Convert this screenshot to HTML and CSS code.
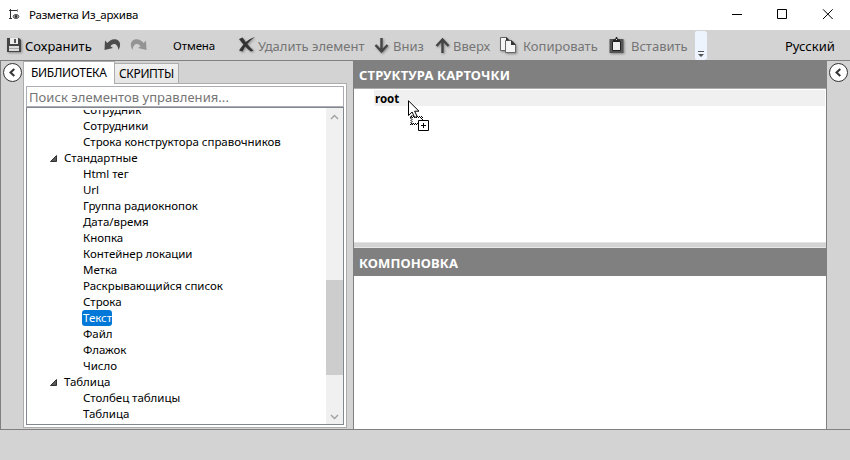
FILE: index.html
```
<!DOCTYPE html>
<html lang="ru">
<head>
<meta charset="utf-8">
<title>Разметка Из_архива</title>
<link rel="stylesheet" href="styles.css">
</head>
<body>
<div class="window">
  <header class="titlebar">
    <svg class="app-icon" width="11" height="11" viewBox="0 0 11 11" fill="none" stroke="#333"><path d="M1.500 0v9.500M0 1.500h8.500M0 9.500h3" /><path d="M8.500 0v3" stroke="#999"/><ellipse cx="7" cy="7.500" rx="2.800" ry="1.900"/><circle cx="7" cy="7.500" r="1" fill="#111"/></svg>
    <span class="title">Разметка Из_архива</span>
    <svg class="caption" width="97" height="12" viewBox="0 0 97 12" fill="none" stroke="#000"><path d="M0 6.500h10M45.500 1.500h9v9h-9zM91 1.300l9.700 9.700M100.700 1.300L91 11"/></svg>
  </header>
  <div class="toolbar">
    <svg class="ic-save shadow" width="16" height="16" viewBox="0 0 16 16"><path d="M1 1h12l2 2v12H1z" fill="#444"/><path d="M4 1h8v6H4z" fill="#eee"/><path d="M8 2h2v4H8z" fill="#555"/><path d="M3 9h10v5H3z" fill="#ddd"/><path d="M3 11.500h10" stroke="#aaa"/></svg>
    <span class="t-save">Сохранить</span>
    <svg class="ic-undo" width="17" height="14" viewBox="0 0 17 14"><path d="M1 2.500L.5 12 9 10 6.500 8.300C9 4.800 13.500 5 14.500 12 18 6 15.500 1.500 11 1.200 7.500 1 5 3 3.300 5z" fill="#4c4c4c"/></svg>
    <svg class="ic-redo" width="17" height="14" viewBox="0 0 17 14"><path d="M16 2.500l.5 9.500L8 10l2.500-1.700C8 4.800 3.500 5 2.500 12-1 6 1.500 1.500 6 1.200 9.500 1 12 3 13.700 5z" fill="#949494"/></svg>
    <span class="t-cancel">Отмена</span>
    <svg class="ic-del shadow" width="17" height="16" viewBox="0 0 17 16" fill="#333"><path d="M0 2L3.500 .5C6 4 10 10 14.500 13.500L12 14.500C8 12 4 7 0 2z"/><path d="M16 0C10 4 6 9 3.500 14.500L0 13.500C4 7 9 2 16 0z"/></svg>
    <span class="t-del dim">Удалить элемент</span>
    <svg class="ic-down shadow" width="15" height="17" viewBox="0 0 15 17" fill="none" stroke="#444" stroke-width="2.400"><path d="M7.500 1v13M1.500 8l6 6.500 6-6.500"/></svg>
    <span class="t-down dim">Вниз</span>
    <svg class="ic-up shadow" width="15" height="17" viewBox="0 0 15 17" fill="none" stroke="#444" stroke-width="2.400"><path d="M7.500 16V3M1.500 9l6-6.500 6 6.500"/></svg>
    <span class="t-up dim">Вверх</span>
    <svg class="ic-copy shadow" width="17" height="17" viewBox="0 0 17 17" fill="#f5f5f5" stroke="#666"><path d="M.5 .5h6l3 3v10h-9z"/><path d="M5.500 3.500h6l4 4v8h-10z"/><path d="M11 3l5 5h-5zM6 0l3.500 3.500H6z" fill="#333" stroke="none"/></svg>
    <span class="t-copy dim">Копировать</span>
    <svg class="ic-paste shadow" width="16" height="17" viewBox="0 0 16 17"><path d="M.5 2h14v14H.5z" fill="#555"/><path d="M3.500 4.500h8v9h-8z" fill="#eee" stroke="#222"/><path d="M4 5V2.500h2L7 0h1l1 2.500h2V5z" fill="#222"/><path d="M7 2h1v1H7z" fill="#ddd"/></svg>
    <span class="t-paste dim">Вставить</span>
    <div class="overflow"><svg width="6" height="7" viewBox="0 0 6 7" fill="#555"><path d="M0 0h6v1H0zM0 3h6L3 6z"/></svg></div>
    <span class="t-lang">Русский</span>
  </div>
  <main class="body">
    <aside class="rail rail-left"><svg width="20" height="20" viewBox="0 0 20 20" fill="#fff" stroke="#333"><circle cx="10" cy="10" r="9"/><path d="M11.800 6.500L8 10l3.800 3.500" fill="none" stroke-width="2"/></svg></aside>
    <section class="library">
      <div class="tabs"><div class="tab active"><span class="t-tab1">БИБЛИОТЕКА</span></div><div class="tab"><span class="t-tab2">СКРИПТЫ</span></div></div>
      <div class="pane">
        <div class="search"><span class="t-search">Поиск элементов управления...</span></div>
        <div class="tree">
          <div class="items">
            <div class="item">Сотрудник</div>
            <div class="item">Сотрудники</div>
            <div class="item">Строка конструктора справочников</div>
            <div class="item group"><svg width="7" height="7" viewBox="0 0 7 7"><path d="M6.500 .5v6h-6z" fill="#595959" stroke="#333"/></svg>Стандартные</div>
            <div class="item">Html тег</div>
            <div class="item">Url</div>
            <div class="item">Группа радиокнопок</div>
            <div class="item">Дата/время</div>
            <div class="item">Кнопка</div>
            <div class="item">Контейнер локации</div>
            <div class="item">Метка</div>
            <div class="item">Раскрывающийся список</div>
            <div class="item">Строка</div>
            <div class="item"><span class="selected">Текст</span></div>
            <div class="item">Файл</div>
            <div class="item">Флажок</div>
            <div class="item">Число</div>
            <div class="item group"><svg width="7" height="7" viewBox="0 0 7 7"><path d="M6.500 .5v6h-6z" fill="#595959" stroke="#333"/></svg>Таблица</div>
            <div class="item">Столбец таблицы</div>
            <div class="item">Таблица</div>
          </div>
          <div class="scrollbar">
            <svg width="9" height="6" viewBox="0 0 9 6" fill="none" stroke="#a0a0a0" stroke-width="1.400"><path d="M1 5l3.500-3.500L8 5"/></svg>
            <div class="thumb"></div>
            <svg class="arrow-down" width="9" height="6" viewBox="0 0 9 6" fill="none" stroke="#a0a0a0" stroke-width="1.400"><path d="M1 1l3.500 3.500L8 1"/></svg>
          </div>
        </div>
      </div>
    </section>
    <section class="work">
      <h2 class="first"><span class="t-struct">СТРУКТУРА КАРТОЧКИ</span></h2>
      <div class="structure"><div class="root"><span class="t-root">root</span></div>
        <svg class="cursor" width="24" height="32" viewBox="0 0 24 32"><path d="M3 16v9M4 15v9" fill="none" stroke="#000" stroke-width="1" stroke-dasharray="1 1"/><path d="M3 16.500h12M2 17.500h12M3 23.500h8M2 24.500h8M13.500 16v4M14.500 17v3" fill="none" stroke="#000" stroke-dasharray="1 1"/><path d="M.5 .8v14.700l3.600-3.500 2.600 5.500 2.500-1-2.600-5.300h4.400z" fill="#fff" stroke="#000"/><path d="M10.500 20.500h10v10h-10z" fill="#fff" stroke="#000"/><path d="M15.500 23v5M13 25.500h5" stroke="#000"/></svg>
      </div>
      <div class="splitter"></div>
      <h2><span class="t-layout">КОМПОНОВКА</span></h2>
      <div class="layout"></div>
    </section>
    <aside class="rail rail-right"><svg width="20" height="20" viewBox="0 0 20 20" fill="#fff" stroke="#333"><circle cx="10" cy="10" r="9"/><path d="M11.800 6.500L8 10l3.800 3.500" fill="none" stroke-width="2"/></svg></aside>
  </main>
  <footer class="status"></footer>
</div>
</body>
</html>
```
FILE: styles.css
```
* { box-sizing: border-box; }
body { margin: 0; font-family: "Noto Sans", "Open Sans", sans-serif; font-size: 11.5px; color: #000; }
svg { display: block; flex: none; overflow: visible; }
span { white-space: nowrap; }
.window { width: 850px; height: 460px; display: flex; flex-direction: column; background: #d3d3d3; overflow: hidden; }
.titlebar { height: 30px; background: #fff; display: flex; align-items: center; padding: 0 17px 2px 9px; }
.title { width: 690px; margin-left: 9px; flex: none; letter-spacing: -.2px; }
.caption { margin-left: 13px; }
.toolbar { height: 31px; flex: none; border-bottom: 1px solid #808080; display: flex; align-items: center; font-size: 13px; padding-left: 6px; }
.toolbar > span { flex: none; line-height: 20px; padding-top: 2px; }
.dim { color: #757575; }
.shadow { filter: drop-shadow(1px 1px 1px #888); }
.t-save { width: 71px; margin-left: 3px; }
.ic-undo { margin-left: 8px; }
.ic-redo { margin-left: 9px; }
.toolbar .t-cancel { width: 66px; margin-left: 26px; font-size: 11.5px; letter-spacing: -.1px; }
.t-del { width: 107px; margin-left: 2px; }
.ic-down { margin-left: 9px; }
.t-down { width: 34px; margin-left: 4px; }
.ic-up { margin-left: 8px; }
.t-up { width: 39px; margin-left: 3px; }
.ic-copy { margin-left: 8px; }
.t-copy { width: 78px; margin-left: 6px; }
.ic-paste { margin-left: 8px; }
.t-paste { width: 57px; margin-left: 6px; }
.overflow { width: 12px; height: 29px; margin-left: 7px; background: #eef4fd; border-radius: 2px 3px 3px 2px; padding: 20px 0 0 3px; }
.t-lang { margin-left: 78px; }
.body { height: 369px; flex: none; display: flex; border-bottom: 1px solid #808080; }
.rail { flex: none; padding-top: 1px; }
.rail-left { width: 23px; border-left: 1px solid #808080; padding-left: 1px; }
.rail-left svg, .rail-right svg { transform: translate(.5px, .5px); }
.rail-right { width: 24px; border-left: 1px solid #808080; padding-left: 1px; }
.library { width: 324px; height: 366px; flex: none; display: flex; flex-direction: column; }
.tabs { display: flex; align-items: flex-end; height: 23px; flex: none; position: relative; z-index: 1; margin-bottom: -1px; }
.tab { height: 21px; width: 64px; border: 1px solid #acacac; border-left: 0; background: linear-gradient(#f0f0f0, #e5e5e5); padding-left: 4px; line-height: 19px; font-size: 12px; letter-spacing: -.35px; }
.tab.active { width: 92px; height: 23px; background: #fff; border-left: 1px solid #acacac; border-bottom: 0; padding-left: 7px; line-height: 21px; letter-spacing: -.3px; }
.pane { flex: 1; border: 1px solid #acacac; background: #fff; padding: 2px; display: flex; flex-direction: column; }
.search { height: 21px; flex: none; border: 1px solid #abadb3; color: #757575; font-size: 13px; line-height: 20px; padding-left: 2px; letter-spacing: .05px; }
.tree { height: 318px; flex: none; border: 1px solid #828790; display: flex; }
.items { flex: 1; height: 314px; margin-top: 2px; overflow: hidden; letter-spacing: -.04px; }
.item { height: 16px; line-height: 16px; margin-left: 56px; display: flex; align-items: center; white-space: nowrap; }
.item:first-child { margin-top: -8px; }
.group { margin-left: 23px; gap: 7px; }
.selected { background: #0078d7; color: #fff; border-radius: 3px; margin-left: -1px; padding-left: 1px; width: 30px; height: 16px; }
.scrollbar { width: 17px; background: #f0f0f0; display: flex; flex-direction: column; padding: 6px 0 4px; }
.scrollbar svg { margin-left: 4px; }
.thumb { height: 95px; margin-top: 160px; background: #cdcdcd; }
.arrow-down { margin-top: auto; }
.work { width: 473px; flex: none; margin-left: 6px; border-left: 1px solid #808080; background: #fff; display: flex; flex-direction: column; }
h2 { margin: 0; height: 28px; flex: none; background: #808080; color: #fff; font-size: 13px; line-height: 30px; padding-left: 5px; letter-spacing: .12px; }
.first { line-height: 28px; border-bottom: 1px solid #acacac; }
.structure { height: 153px; flex: none; position: relative; padding: 1px 0 0 20px; }
.root { height: 16px; width: 451px; background: #f0f0f0; line-height: 17px; font-weight: bold; padding-left: 1px; }
.cursor { position: absolute; left: 54px; top: 11px; }
.splitter { height: 6px; flex: none; background: #d3d3d3; border-top: 1px solid #e3e3e3; border-bottom: 1px solid #e8e8e8; }
.status { flex: 1; }
```
